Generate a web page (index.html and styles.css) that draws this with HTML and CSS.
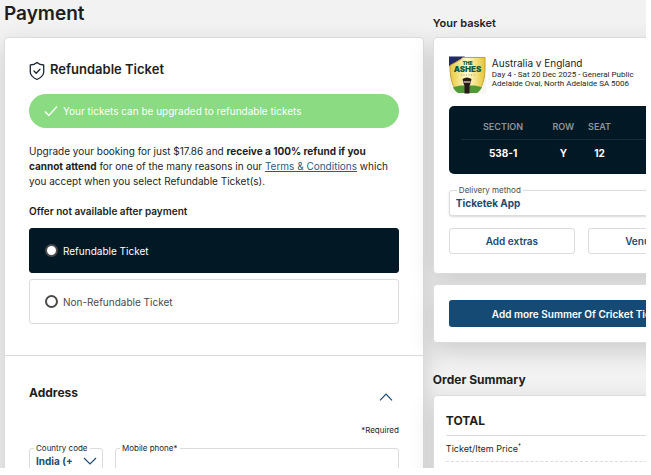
FILE: index.html
```
<!DOCTYPE html>
<html lang="en">
  <head>
    <meta charset="utf-8">
    <title>Payment</title>
    <meta name="viewport" content="width=device-width, initial-scale=1.0">
    <link rel="stylesheet" href="styles.css">
  </head>
  <body>
    <div class="page">
      <main class="column">
        <h1>Payment</h1>
        <div class="card main-card">
          <section class="refund">
            <h2 class="refund-title">
              <svg class="shield" viewBox="0 0 16 20" fill="none" stroke="#1c2733" stroke-width="1.3" stroke-linejoin="round" stroke-linecap="round">
                <path d="M8 1.5C6.3 3 3.800 3.900 1.300 4V11c0 3.500 3 5.800 6.700 7.500 3.700-1.700 6.700-4 6.700-7.500V4C12.200 3.900 9.700 3 8 1.500z"/>
                <path d="M5 10l2.200 2.200L11 8.200"/>
              </svg>
              Refundable Ticket
            </h2>
            <div class="banner">
              <svg class="tick" viewBox="0 0 14 12" fill="none" stroke="#fff" stroke-width="1.4">
                <path d="M1 6.500L4.800 10.500L13 1.500"/>
              </svg>
              Your tickets can be upgraded to refundable tickets
            </div>
            <p class="offer">Upgrade your booking for just $17.86 and <strong>receive a 100% refund if you cannot attend</strong> for one of the many reasons in our <a href="#">Terms &amp; Conditions</a> which you accept when you select Refundable Ticket(s).</p>
            <p class="note">Offer not available after payment</p>
            <label class="option selected">
              <input type="radio" name="ticket" checked>
              Refundable Ticket
            </label>
            <label class="option">
              <input type="radio" name="ticket">
              Non-Refundable Ticket
            </label>
          </section>
          <section class="address">
            <div class="address-head">
              <h2>Address</h2>
              <button class="toggle" type="button" aria-label="Collapse address">
                <svg viewBox="0 0 14 8" fill="none" stroke="#1d4a75" stroke-width="1.200">
                  <path d="M1 7.300L7 1L13 7.300"/>
                </svg>
              </button>
            </div>
            <p class="required">*Required</p>
            <div class="fields">
              <div class="field country">
                <label for="country">Country code</label>
                <select id="country">
                  <option>India (+91)</option>
                </select>
                <svg class="arrow" viewBox="0 0 14 8" fill="none" stroke="#1d4a75" stroke-width="1.200">
                  <path d="M1 1L7 7L13 1"/>
                </svg>
              </div>
              <div class="field phone">
                <label for="phone">Mobile phone*</label>
                <input type="tel" id="phone">
              </div>
            </div>
          </section>
        </div>
      </main>

      <aside class="column">
        <h2 class="basket-title">Your basket</h2>
        <div class="card basket">
          <div class="event">
            <svg class="thumb" viewBox="0 0 37 37">
              <defs>
                <linearGradient id="gold" x1="0" y1="0" x2="1" y2="0">
                  <stop offset="0" stop-color="#e8c93c"/>
                  <stop offset="0.5" stop-color="#fffbd0"/>
                  <stop offset="1" stop-color="#e6c534"/>
                </linearGradient>
              </defs>
              <rect width="37" height="37" rx="2" fill="#f6f6f1"/>
              <path d="M0 0H16L0 10z" fill="#232a6b"/>
              <path d="M1 9C6 6 11 4 14 1H36V10C36 22 34 30 28 36H9C4 31 1 23 1 9z" fill="url(#gold)" stroke="#c6a234"/>
              <path d="M4 31C9 28 28 28 33 31C31 34 30 35 28 36.500H9C7 35 5 33 4 31z" fill="#4f9a35"/>
              <text class="logo-small" x="18.500" y="8.500">THE</text>
              <text class="logo-big" x="18.500" y="15.500">ASHES</text>
              <path d="M12 18.500h14" stroke="#8aa090" stroke-width="1" stroke-dasharray="1 1.500"/>
              <path d="M13.500 22.500q4.500-3 9 0l-1 4.500-1 2v8h-5v-8l-1-2z" fill="#251a18"/>
              <path d="M14.500 25.500h7" stroke="#f0e4c4" stroke-width="1.200"/>
            </svg>
            <div>
              <h3>Australia v England</h3>
              <p>Day 4 - Sat 20 Dec 2025 - General Public</p>
              <p>Adelaide Oval, North Adelaide SA 5006</p>
            </div>
          </div>
          <div class="seats">
            <table>
              <tr>
                <th class="col-section">SECTION</th>
                <th class="col-seat">ROW</th>
                <th class="col-seat">SEAT</th>
                <th></th>
              </tr>
              <tr>
                <td>538-1</td>
                <td>Y</td>
                <td>12</td>
                <td></td>
              </tr>
            </table>
          </div>
          <div class="field delivery">
            <label for="delivery">Delivery method</label>
            <select id="delivery">
              <option>Ticketek App</option>
            </select>
          </div>
          <div class="buttons">
            <button type="button">Add extras</button>
            <button type="button">Venue info</button>
          </div>
        </div>
        <div class="card more">
          <button type="button">Add more Summer Of Cricket Tickets</button>
        </div>
        <h2 class="summary-title">Order Summary</h2>
        <div class="card summary">
          <h3>TOTAL</h3>
          <p>Ticket/Item Price<sup>†</sup></p>
        </div>
      </aside>
    </div>
  </body>
</html>
```

FILE: styles.css
```
* {
  box-sizing: border-box;
}
body {
  margin: 0;
  background-color: white;
  color: #1e1e1e;
  font-family: Inter, "Liberation Sans", sans-serif;
  font-size: 10px;
}
h1, h2, h3, p {
  margin: 0;
}
button, input, select {
  font-family: inherit;
}
.page {
  display: grid;
  grid-template-columns: 65.4% 46.3%;
  column-gap: 9px;
  height: calc(100vh - 7px);
  margin-right: 5px;
  padding-left: 4px;
  background-color: #f2f2f2;
  overflow: hidden;
}
.column {
  min-width: 0;
}
.card {
  background-color: white;
  border: 1px solid #dcdcdc;
  border-radius: 4px;
  box-shadow: 0 8px 24px rgba(0, 0, 0, 0.16);
}
h1 {
  height: 37px;
  font-size: 19px;
  font-weight: 600;
  line-height: 27px;
}
h2 {
  font-size: 12px;
  font-weight: 700;
  line-height: 16px;
}

/* refundable ticket */
.main-card {
  height: 100%;
}
.refund {
  padding: 23px 24px 31px;
  border-bottom: 1px solid #dcdcdc;
}
.refund-title {
  display: flex;
  align-items: flex-start;
  gap: 5px;
  font-size: 13px;
  font-weight: 600;
}
.shield {
  width: 16px;
  height: 20px;
}
.banner {
  display: flex;
  align-items: center;
  gap: 5px;
  height: 34px;
  margin-top: 13px;
  padding-left: 15px;
  border-radius: 17px;
  background-color: #8adb81;
  color: white;
}
.tick {
  width: 14px;
  height: 12px;
}
.offer {
  margin-top: 16px;
  line-height: 15px;
}
.offer a {
  color: #2a5c82;
}
.note {
  margin: 15px 0 9px;
  font-weight: 600;
  line-height: 15px;
}
.option {
  display: flex;
  align-items: center;
  gap: 5px;
  height: 45px;
  margin-top: 6px;
  padding-left: 15px;
  border: 1px solid #dcdcdc;
  border-radius: 3px;
  color: #4a4a4a;
}
.option.selected {
  background-color: #021825;
  border-color: #021825;
  color: white;
}
.option input {
  appearance: none;
  width: 13px;
  height: 13px;
  margin: 0;
  border: 2px solid #4a4a4a;
  border-radius: 50%;
  background-color: white;
}

/* address */
.address {
  padding: 29px 24px 0;
}
.address-head {
  display: flex;
  align-items: center;
  justify-content: space-between;
}
.toggle {
  padding: 8px 6px 0;
  border: 0;
  background: none;
}
.toggle svg {
  display: block;
  width: 14px;
  height: 8px;
}
.required {
  margin: 23px 0 12px;
  font-size: 8px;
  line-height: 12px;
  text-align: right;
}
.fields {
  display: flex;
  gap: 12px;
}
.field {
  position: relative;
}
.field label {
  position: absolute;
  top: -6px;
  left: 5px;
  padding: 0 2px;
  background-color: white;
  font-size: 8px;
  line-height: 12px;
}
.field select,
.field input {
  appearance: none;
  display: block;
  width: 100%;
  height: 26px;
  padding: 0 6px;
  border: 1px solid #dcdcdc;
  border-radius: 3px;
  background-color: white;
  color: #1d4a75;
  font-size: 10px;
  font-weight: 700;
}
.country {
  flex: 0 0 20%;
}
.country select {
  padding-right: 30px;
}
.arrow {
  position: absolute;
  top: 9px;
  right: 6px;
  width: 14px;
  height: 8px;
}
.phone {
  flex: 1;
}

/* basket */
.basket-title {
  height: 37px;
  font-size: 11px;
  font-weight: 600;
  padding-top: 15px;
}
.basket {
  padding: 18px 15px 19px;
}
.event {
  display: flex;
  gap: 6px;
  white-space: nowrap;
}
.thumb {
  width: 37px;
  height: 38px;
}
.logo-small,
.logo-big {
  fill: #0d5a40;
  font-weight: 900;
  text-anchor: middle;
}
.logo-small {
  font-size: 5px;
}
.logo-big {
  font-size: 8px;
}
.event h3 {
  font-size: 10px;
  font-weight: 400;
  line-height: 14px;
}
.event p {
  font-family: Roboto, "Liberation Sans", sans-serif;
  font-size: 8px;
  line-height: 9px;
}
.seats {
  margin-top: 12px;
  padding: 8px 12px;
  border-radius: 5px;
  background-color: #021825;
}
.seats table {
  width: 100%;
  border-collapse: collapse;
  table-layout: fixed;
}
.seats th {
  height: 25px;
  padding: 0;
  border-bottom: 1px solid #172b38;
  color: #8b959b;
  font-size: 9px;
  font-weight: 600;
}
.seats td {
  height: 27px;
  padding: 0;
  color: white;
  font-weight: 700;
  text-align: center;
}
.col-section {
  width: 35%;
}
.col-seat {
  width: 15%;
}
.delivery {
  margin-top: 16px;
}
.delivery select {
  box-shadow: 0 1px 2px rgba(0, 0, 0, 0.15);
}
.delivery label {
  left: 8px;
  color: #4a4a4a;
}
.buttons {
  display: flex;
  gap: 13px;
  margin-top: 12px;
}
.buttons button {
  flex: 1;
  height: 26px;
  padding: 0;
  border: 1px solid #dcdcdc;
  border-radius: 3px;
  background-color: white;
  color: #1d4a75;
  font-size: 10px;
  font-weight: 600;
}
.more {
  margin-top: 10px;
  padding: 15px;
}
.more button {
  display: block;
  width: 100%;
  height: 27px;
  padding: 0;
  border: 0;
  border-radius: 3px;
  background-color: #154a75;
  color: white;
  font-size: 10px;
  font-weight: 600;
}

/* order summary */
.summary-title {
  margin: 29px 0 7px;
}
.summary {
  height: 100%;
  padding: 15px 12px;
}
.summary h3 {
  padding-bottom: 5px;
  border-bottom: 1px solid #dcdcdc;
  font-size: 12px;
  font-weight: 700;
  line-height: 19px;
}
.summary p {
  padding: 5px 0;
  border-bottom: 1px dashed #dcdcdc;
  font-size: 9px;
  line-height: 15px;
}
.summary sup {
  font-size: 6px;
  line-height: 1px;
}
```
